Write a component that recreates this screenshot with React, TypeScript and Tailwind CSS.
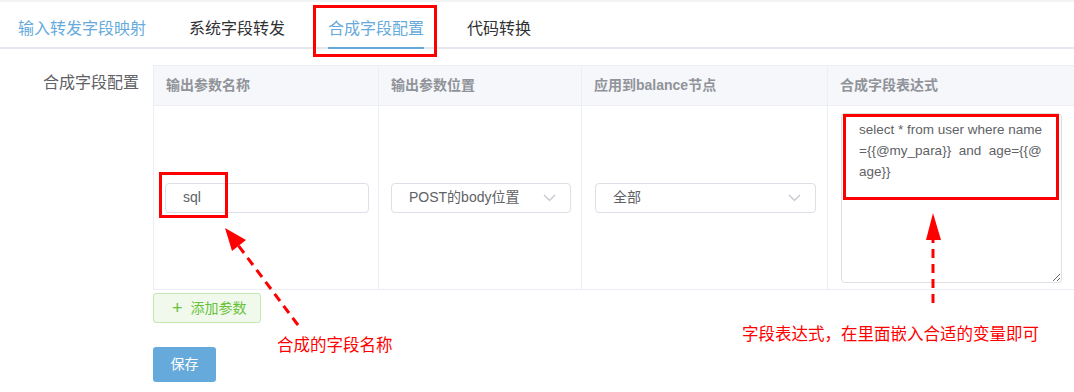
import React from "react";

const tabs = ["输入转发字段映射", "系统字段转发", "合成字段配置", "代码转换"];

function Chevron() {
  return (
    <svg width="13" height="8" viewBox="0 0 13 8" className="shrink-0">
      <polyline points="1,1 6.5,6.5 12,1" fill="none" stroke="#c0c4cc" strokeWidth="1.2" />
    </svg>
  );
}

function SelectBox({ value, width }: { value: string; width: string }) {
  return (
    <div className={`${width} flex h-[30px] items-center justify-between rounded-[4px] border border-[#dcdfe6] bg-white pl-[17px] pr-[14px]`}>
      <span className="text-[14px] text-[#606266]">{value}</span>
      <Chevron />
    </div>
  );
}

function Annotations() {
  return (
    <svg className="pointer-events-none absolute inset-0" width="1074" height="392" viewBox="0 0 1074 392">
      <g fill="none" stroke="#ff0000" strokeWidth="3">
        <rect x="314.5" y="6.5" width="121" height="49" />
        <rect x="160.5" y="173.5" width="66" height="43" />
        <rect x="844.5" y="115.5" width="213" height="83" />
      </g>
      <g stroke="#ff0000" strokeWidth="3" strokeDasharray="9 6" fill="none">
        <line x1="298" y1="325" x2="238" y2="245" />
        <line x1="933" y1="303" x2="933" y2="238" />
      </g>
      <g fill="#ff0000">
        <polygon points="225,228 246,240 232,251" />
        <polygon points="933,213 941,240 926,240" />
      </g>
    </svg>
  );
}

export default function App() {
  return (
    <div
      className="relative h-[392px] w-[1074px] overflow-hidden bg-white"
      style={{ fontFamily: '"Liberation Sans", "Noto Sans CJK SC", sans-serif' }}
    >
      <div className="h-[2px] bg-[#f2f3f5]" />

      {/* tabs */}
      <div className="flex h-[47px] items-start gap-[43px] border-b-2 border-[#e4e7ed] pl-[18px]">
        {tabs.map((t, i) => {
          const active = i === 2;
          const blue = i === 0 || i === 2;
          return (
            <div
              key={t}
              className={`-mb-[2px] h-[47px] border-b-2 pt-[17px] pb-[8px] text-[16px] leading-[20px] ${
                active ? "border-[#66aadc]" : "border-transparent"
              } ${blue ? "text-[#66aadc]" : "text-[#303133]"}`}
            >
              {t}
            </div>
          );
        })}
      </div>

      {/* form */}
      <div className="mt-[16px] flex">
        <div className="w-[153px] shrink-0 pr-[14px] text-right text-[16px] leading-[36px] text-[#606266]">合成字段配置</div>

        <div className="flex flex-col items-start">
          <div className="grid w-[921px] grid-cols-[225px_203px_246px_246px] border-t border-l border-[#ebeef5]">
            {["输出参数名称", "输出参数位置", "应用到balance节点", "合成字段表达式"].map((h, i) => (
              <div
                key={h}
                className={`flex h-[40px] items-center border-b border-[#ebeef5] bg-[#f5f7fa] pl-[12px] text-[14px] font-bold text-[#909399] ${
                  i < 3 ? "border-r" : ""
                }`}
              >
                {h}
              </div>
            ))}

            <div className="flex h-[184px] items-center border-r border-b border-[#ebeef5] pl-[11px] pr-[9px]">
              <div className="flex h-[30px] w-full items-center rounded-[4px] border border-[#dcdfe6] pl-[17px] text-[14px] text-[#606266]">
                sql
              </div>
            </div>
            <div className="flex h-[184px] items-center border-r border-b border-[#ebeef5] pl-[12px]">
              <SelectBox value="POST的body位置" width="w-[180px]" />
            </div>
            <div className="flex h-[184px] items-center border-r border-b border-[#ebeef5] pl-[13px]">
              <SelectBox value="全部" width="w-[221px]" />
            </div>
            <div className="flex h-[184px] items-center border-b border-[#ebeef5] pl-[13px]">
              <textarea
                readOnly
                className="h-[170px] w-[221px] resize overflow-hidden whitespace-pre rounded-[4px] border border-[#dcdfe6] pt-[5px] pl-[17px] text-[13.5px] leading-[21px] text-[#606266] outline-none"
                value={"select * from user where name\n={{@my_para}}  and  age={{@\nage}}"}
              />
            </div>
          </div>

          <button className="mt-[3px] flex h-[30px] w-[108px] items-center gap-[8px] rounded-[3px] border border-[#c2e7b0] bg-[#f0f9eb] pl-[18px] text-[14px] text-[#67c23a]">
            <span className="text-[18px] leading-none font-light">+</span>
            <span>添加参数</span>
          </button>

          <button className="mt-[24px] h-[35px] w-[63px] rounded-[3px] bg-[#66aadc] text-[14px] text-white">保存</button>
        </div>
      </div>

      <Annotations />
      <div className="absolute top-[333px] left-[277px] text-[16.5px] leading-[24px] text-[#ff0000]">合成的字段名称</div>
      <div className="absolute top-[322px] left-[742px] text-[16.5px] leading-[24px] text-[#ff0000]">
        字段表达式，在里面嵌入合适的变量即可
      </div>
    </div>
  );
}
